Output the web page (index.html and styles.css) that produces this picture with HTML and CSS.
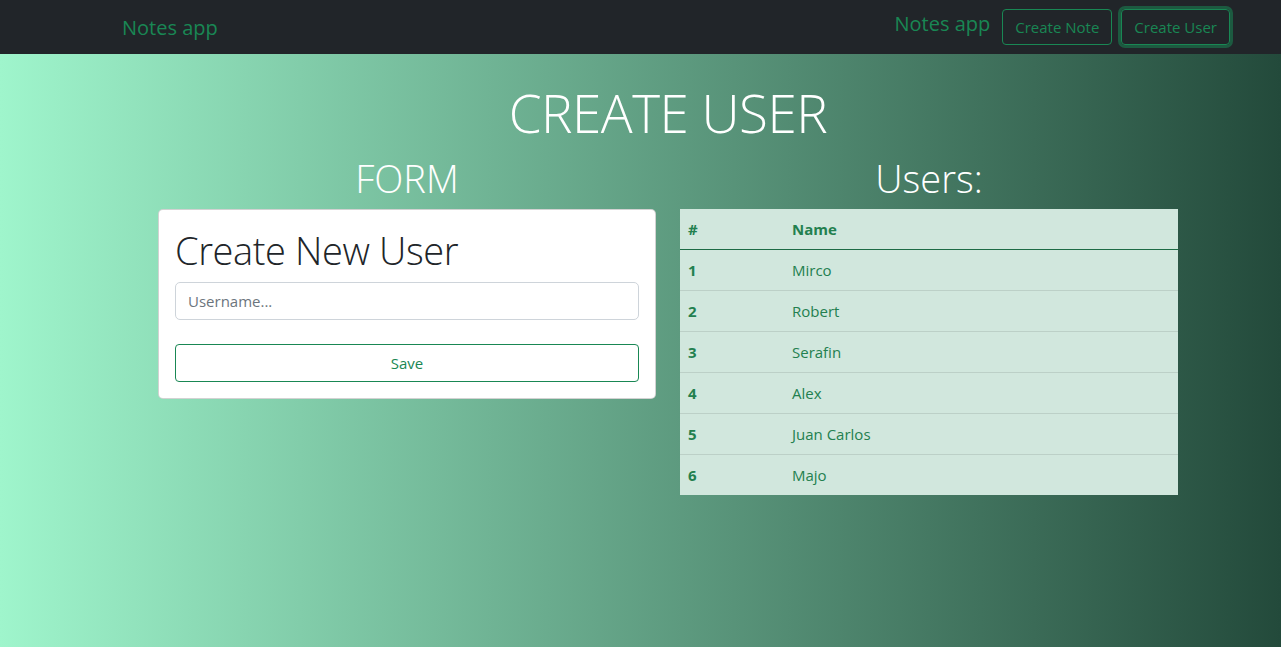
FILE: index.html
```html
<!DOCTYPE html>
<html lang="en">
<head>
<meta charset="utf-8">
<title>Notes app</title>
<link rel="stylesheet" href="styles.css">
</head>
<body>
<nav class="navbar">
  <a class="brand" href="#">Notes app</a>
  <div class="nav-right">
    <a class="brand brand-right" href="#">Notes app</a>
    <button class="btn btn-outline">Create Note</button>
    <button class="btn btn-outline btn-focus">Create User</button>
  </div>
</nav>
<main class="page">
  <h1 class="display">CREATE USER</h1>
  <div class="row">
    <section class="col">
      <h2 class="col-title">FORM</h2>
      <div class="card">
        <h1 class="card-title">Create New User</h1>
        <input class="input" type="text" placeholder="Username...">
        <button class="btn btn-outline btn-block">Save</button>
      </div>
    </section>
    <section class="col">
      <h2 class="col-title">Users:</h2>
      <table class="table">
        <thead>
          <tr><th class="c-num">#</th><th>Name</th></tr>
        </thead>
        <tbody>
          <tr><th class="c-num">1</th><td>Mirco</td></tr>
          <tr><th class="c-num">2</th><td>Robert</td></tr>
          <tr><th class="c-num">3</th><td>Serafin</td></tr>
          <tr><th class="c-num">4</th><td>Alex</td></tr>
          <tr><th class="c-num">5</th><td>Juan Carlos</td></tr>
          <tr><th class="c-num">6</th><td>Majo</td></tr>
        </tbody>
      </table>
    </section>
  </div>
</main>
</body>
</html>
```

FILE: styles.css
```css
* { box-sizing: border-box; }
html, body { height: 100%; }
body {
  margin: 0;
  font-family: "Open Sans", "Noto Sans", sans-serif;
  font-size: 16px;
  line-height: 1.5;
  color: #212529;
  background: linear-gradient(to right, #9ff5cc 0%, #234a3b 100%);
  min-height: 647px;
}
.navbar {
  background: #212529;
  height: 54px;
  display: flex;
  align-items: center;
  justify-content: space-between;
  padding: 0 51px 0 122px;
}
.brand {
  color: #198754;
  text-decoration: none;
  font-size: 20px;
  line-height: 30px;
  margin-top: 1px;
}
.nav-right {
  display: flex;
  align-items: center;
  gap: 9px;
}
.brand-right {
  margin-right: 3px;
  margin-top: -7px;
}
.btn {
  font-family: inherit;
  font-size: 15px;
  line-height: 22px;
  padding: 6px 12px;
  border-radius: 4px;
  background: transparent;
  cursor: pointer;
}
.btn-outline {
  color: #198754;
  border: 1px solid #198754;
}
.btn-focus {
  box-shadow: 0 0 0 3px rgba(25, 135, 84, 0.55);
}
.page {
  width: 1044px;
  margin-left: 146px;
  color: #fff;
}
.display {
  font-size: 53px;
  font-weight: 300;
  line-height: 1.2;
  text-align: center;
  margin: 27px 0 0;
  letter-spacing: -0.5px;
}
.row {
  display: flex;
  gap: 24px;
  padding: 0 12px;
}
.col {
  flex: 1;
  min-width: 0;
}
.col-title {
  font-size: 38px;
  font-weight: 300;
  line-height: 1.2;
  text-align: center;
  margin: 11px 0 8px;
}
.card {
  background: #fff;
  border: 1px solid rgba(0, 0, 0, 0.175);
  border-radius: 5px;
  padding: 16px;
  color: #212529;
}
.card-title {
  font-size: 38px;
  font-weight: 300;
  line-height: 48px;
  margin: 0 0 8px;
  letter-spacing: -0.4px;
}
.input {
  display: block;
  width: 100%;
  height: 38px;
  padding: 6px 12px;
  font-family: inherit;
  font-size: 15px;
  color: #212529;
  border: 1px solid #ced4da;
  border-radius: 5px;
  margin-bottom: 24px;
  background: #fff;
}
.input::placeholder { color: #6c757d; }
.btn-block {
  display: block;
  width: 100%;
  height: 38px;
}
.table {
  width: 100%;
  border-collapse: collapse;
  background: #d1e7dd;
  color: #23804f;
  font-size: 15px;
}
.table th, .table td {
  text-align: left;
  padding: 8px 8px;
  line-height: 24px;
  border-bottom: 1px solid #bcd0c7;
}
.table thead th {
  font-weight: 700;
  border-bottom: 1px solid #1d6b45;
  padding-top: 8px;
  padding-bottom: 8px;
}
.table tbody tr:last-child th, .table tbody tr:last-child td {
  border-bottom: none;
}
.table tbody th { font-weight: 700; }
.c-num { width: 104px; }
```
